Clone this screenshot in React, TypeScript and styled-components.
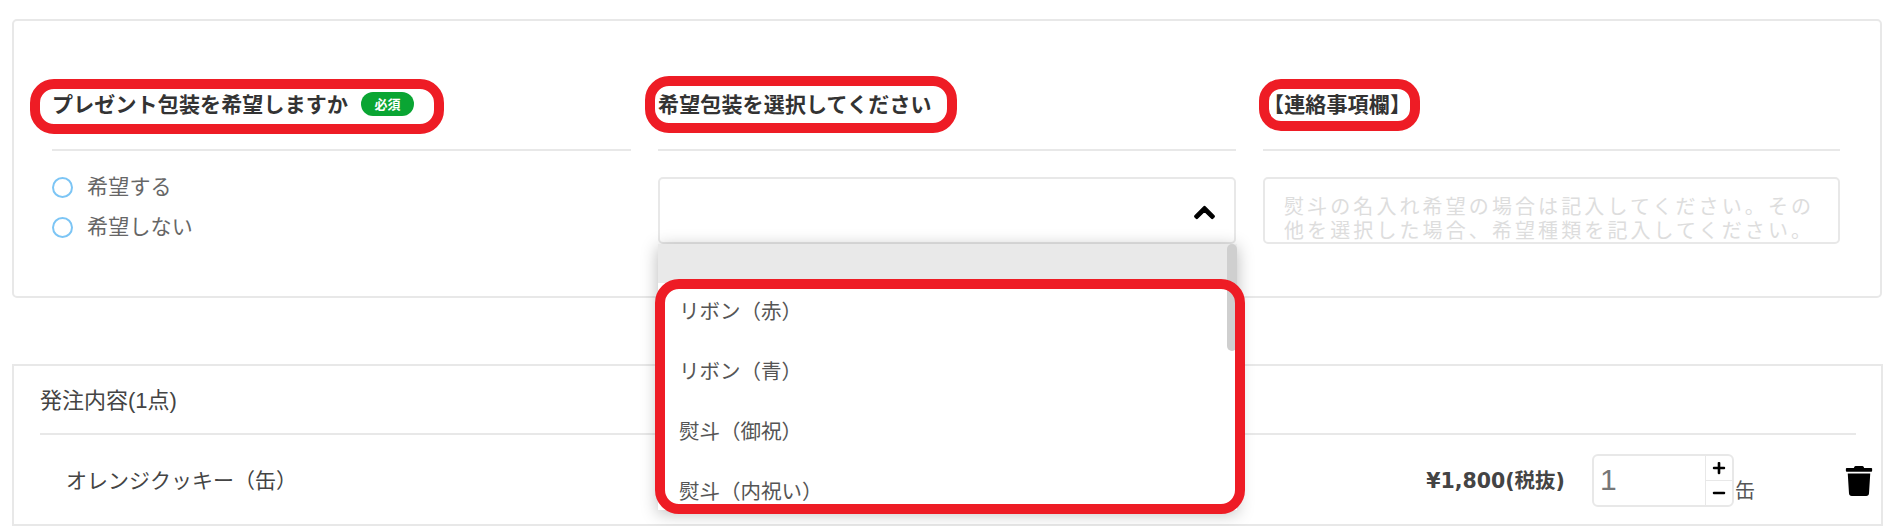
import React from "react";
import styled, { createGlobalStyle } from "styled-components";
import { FaChevronUp, FaMinus, FaPlus, FaTrash } from "react-icons/fa";

const GlobalStyle = createGlobalStyle`
  html, body {
    margin: 0;
    padding: 0;
    background: #fff;
    height: 526px;
    overflow: hidden;
    font-family: "Liberation Sans", "Noto Sans CJK JP", sans-serif;
  }
`;

const Page = styled.div`
  box-sizing: border-box;
  height: 526px;
  overflow: hidden;
  padding: 19px 0 0 12px;
`;

const OptionPanel = styled.section`
  box-sizing: border-box;
  width: 1870px;
  height: 279px;
  border: 2px solid #e8e8e8;
  border-radius: 5px;
  padding: 63px 0 0 38px;
  display: grid;
  grid-template-columns: 579px 578px 577px;
  column-gap: 27px;
`;

const Column = styled.div`
  display: flex;
  flex-direction: column;
  position: relative;
`;

const Heading = styled.div`
  box-sizing: border-box;
  height: 67px;
  border-bottom: 2px solid #e8e8e8;
  margin-bottom: 26px;
  line-height: 42px;
  font-size: 21px;
  font-weight: 700;
  letter-spacing: 0.15px;
  color: #333;
  display: flex;
  align-items: flex-start;
  white-space: nowrap;
`;

const Badge = styled.span`
  width: 53px;
  height: 24px;
  margin: 8px 0 0 13px;
  border-radius: 12px;
  background: #0aa533;
  color: #fff;
  font-family: "Noto Sans CJK JP", sans-serif;
  font-size: 13px;
  line-height: 24px;
  letter-spacing: 0;
  text-align: center;
`;

const Ring = styled.div<{ $left: number; $top: number; $width: number; $height: number; $radius: number }>`
  position: absolute;
  box-sizing: border-box;
  left: ${(p) => p.$left}px;
  top: ${(p) => p.$top}px;
  width: ${(p) => p.$width}px;
  height: ${(p) => p.$height}px;
  border: 10px solid #ee1c25;
  border-radius: ${(p) => p.$radius}px;
  pointer-events: none;
  z-index: 3;
`;

const RadioGroup = styled.div`
  display: flex;
  flex-direction: column;
  gap: 19px;
`;

const RadioRow = styled.label`
  display: flex;
  align-items: center;
  height: 21px;
  font-size: 21px;
  line-height: 19px;
  letter-spacing: 0.2px;
  color: #666;
`;

const RadioCircle = styled.span`
  box-sizing: border-box;
  width: 21px;
  height: 21px;
  margin-right: 14px;
  border: 2px solid #7cc5f5;
  border-radius: 50%;
`;

const RadioText = styled.span`
  margin-bottom: 2px;
`;

const SelectBox = styled.div`
  box-sizing: border-box;
  height: 67px;
  border: 2px solid #e8e8e8;
  border-radius: 5px;
  display: flex;
  align-items: center;
  justify-content: flex-end;
  padding: 3px 18px 0 0;
  color: #000;

  svg {
    stroke: currentColor;
    stroke-width: 28px;
  }
`;

const Dropdown = styled.div`
  position: absolute;
  left: 0;
  top: 160px;
  width: 579px;
  height: 266px;
  background: #fff;
  box-shadow: 0 3px 16px rgba(0, 0, 0, 0.28);
  z-index: 2;
`;

const OptionList = styled.ul`
  list-style: none;
  margin: 0;
  padding: 0;
  height: 100%;
  overflow: hidden;
`;

const BlankOption = styled.li`
  height: 39px;
  background: #e9e9e9;
`;

const Option = styled.li`
  height: 60px;
  line-height: 58px;
  padding-left: 21px;
  font-size: 20.5px;
  color: #555;
`;

const ScrollThumb = styled.div`
  position: absolute;
  top: 0;
  right: 0;
  width: 10px;
  height: 107px;
  border-radius: 5px;
  background: #cfcfcf;
`;

const Note = styled.textarea`
  box-sizing: border-box;
  display: block;
  width: 100%;
  height: 67px;
  margin: 0;
  padding: 15px 15px 0 19px;
  border: 2px solid #e8e8e8;
  border-radius: 5px;
  resize: none;
  overflow: hidden;
  outline: none;
  font-family: "Noto Sans CJK JP", sans-serif;
  font-size: 20px;
  line-height: 24px;
  letter-spacing: 3.1px;

  &::placeholder {
    color: #ddd;
    opacity: 1;
  }
`;

const OrderPanel = styled.section`
  box-sizing: border-box;
  width: 1871px;
  height: 162px;
  margin-top: 66px;
  border: 2px solid #e8e8e8;
  padding: 0 25px 0 26px;
`;

const OrderTitle = styled.div`
  box-sizing: border-box;
  height: 69px;
  line-height: 70px;
  border-bottom: 2px solid #e8e8e8;
  font-size: 22px;
  color: #444;
`;

const ItemRow = styled.div`
  display: flex;
  align-items: center;
  height: 53px;
  margin: 19px -18px 0 0;
  padding-left: 26px;
`;

const ItemName = styled.span`
  margin-bottom: 3px;
  font-size: 21px;
  color: #444;
`;

const Price = styled.span`
  margin: 0 0 3px auto;
  font-family: "DejaVu Sans", "Noto Sans CJK JP", sans-serif;
  font-size: 20.5px;
  font-weight: 700;
  color: #444;
`;

const Stepper = styled.div`
  box-sizing: border-box;
  width: 142px;
  height: 53px;
  margin-left: 27px;
  border: 2px solid #e8e8e8;
  border-radius: 6px;
  display: flex;
`;

const Quantity = styled.div`
  flex: 1;
  padding-left: 6px;
  font-size: 30px;
  line-height: 48px;
  color: #777;
`;

const StepButtons = styled.div`
  width: 26px;
  border-left: 1px solid #e8e8e8;
  display: flex;
  flex-direction: column;
`;

const StepButton = styled.button`
  flex: 1;
  padding: 0;
  border: 0;
  background: none;
  color: #000;
  display: flex;
  align-items: center;
  justify-content: center;

  & + & {
    border-top: 1px solid #e8e8e8;
  }
`;

const Unit = styled.span`
  align-self: flex-end;
  margin: 0 0 3px 1px;
  font-size: 20px;
  color: #555;
`;

const TrashButton = styled.button`
  margin-left: 89px;
  padding: 0;
  border: 0;
  background: none;
  color: #000;
  display: flex;
`;

export default function App() {
  return (
    <>
      <GlobalStyle />
      <Page>
        <OptionPanel>
          <Column>
            <Heading>
              プレゼント包装を希望しますか
              <Badge>必須</Badge>
            </Heading>
            <Ring $left={-22} $top={-5} $width={414} $height={55} $radius={24} />
            <RadioGroup>
              <RadioRow>
                <RadioCircle />
                <RadioText>希望する</RadioText>
              </RadioRow>
              <RadioRow>
                <RadioCircle />
                <RadioText>希望しない</RadioText>
              </RadioRow>
            </RadioGroup>
          </Column>
          <Column>
            <Heading>希望包装を選択してください</Heading>
            <Ring $left={-13} $top={-8} $width={312} $height={57} $radius={24} />
            <SelectBox>
              <FaChevronUp size={23} />
            </SelectBox>
            <Dropdown>
              <OptionList>
                <BlankOption />
                <Option>リボン（赤）</Option>
                <Option>リボン（青）</Option>
                <Option>熨斗（御祝）</Option>
                <Option>熨斗（内祝い）</Option>
              </OptionList>
              <ScrollThumb />
              <Ring $left={-3} $top={35} $width={590} $height={235} $radius={24} />
            </Dropdown>
          </Column>
          <Column>
            <Heading>【連絡事項欄】</Heading>
            <Ring $left={-4} $top={-5} $width={161} $height={52} $radius={22} />
            <Note
              readOnly
              placeholder="熨斗の名入れ希望の場合は記入してください。その他を選択した場合、希望種類を記入してください。"
            />
          </Column>
        </OptionPanel>
        <OrderPanel>
          <OrderTitle>発注内容(1点)</OrderTitle>
          <ItemRow>
            <ItemName>オレンジクッキー（缶）</ItemName>
            <Price>¥1,800(税抜)</Price>
            <Stepper>
              <Quantity>1</Quantity>
              <StepButtons>
                <StepButton>
                  <FaPlus size={14} />
                </StepButton>
                <StepButton>
                  <FaMinus size={14} />
                </StepButton>
              </StepButtons>
            </Stepper>
            <Unit>缶</Unit>
            <TrashButton>
              <FaTrash size={30} />
            </TrashButton>
          </ItemRow>
        </OrderPanel>
      </Page>
    </>
  );
}
